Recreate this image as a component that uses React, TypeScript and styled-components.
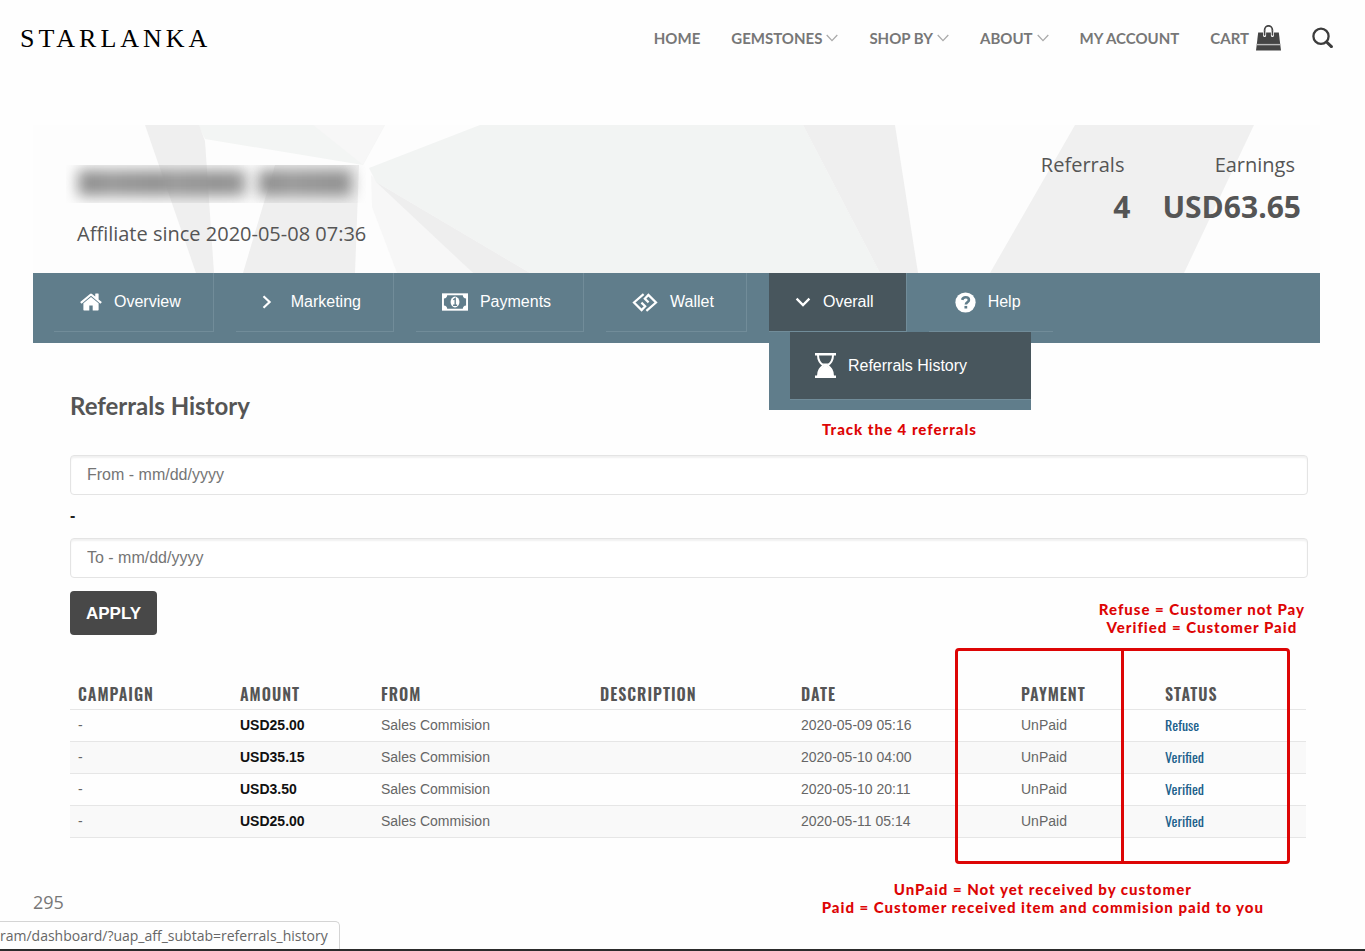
import React from "react";
import styled, { createGlobalStyle } from "styled-components";

const sans = `"Liberation Sans", Arial, sans-serif`;
const openSans = `"Open Sans", "Noto Sans", sans-serif`;
const lato = `Lato, "Open Sans", sans-serif`;
const narrow = `Oswald, "Liberation Sans Narrow", "Roboto Condensed", "Open Sans Condensed", "Liberation Sans", sans-serif`;

const teal = "#607d8b";
const slate = "#48565d";
const red = "#dd0505";

const GlobalStyle = createGlobalStyle`
  *, *::before, *::after { box-sizing: border-box; }
  body { margin: 0; background: #fefefe; color: #555; font-family: ${sans}; }
  a { color: inherit; text-decoration: none; }
  ul { list-style: none; margin: 0; padding: 0; }
  svg { display: block; flex: none; }
`;

const Page = styled.div`
  position: relative;
  min-height: 100vh;
  overflow-x: hidden;
  border-bottom: 2px solid #2b2b2b;
`;

const Header = styled.header`
  display: flex;
  align-items: center;
  justify-content: space-between;
  height: 76px;
  padding: 0 32px 0 20px;
`;

const Logo = styled.a`
  padding-top: 2px;
  color: #000;
  font: 26px/30px "Liberation Serif", "Times New Roman", serif;
  letter-spacing: 4px;
`;

const MainMenu = styled.ul`
  display: flex;
  align-items: center;
  gap: 31px;
`;

const MenuLink = styled.a<{ $wide?: boolean }>`
  display: flex;
  align-items: center;
  gap: ${(p) => (p.$wide ? 7 : 4)}px;
  color: #777;
  font: 700 15px/20px ${lato};
`;

const IconButton = styled.button`
  padding: 2px 0 0;
  border: 0;
  background: none;
  color: #444;
  cursor: pointer;
`;

const Main = styled.main`
  padding: 49px 45px 24px 33px;
`;

const Banner = styled.section`
  position: relative;
  display: flex;
  justify-content: space-between;
  height: 148px;
  background: #fdfdfd;
`;

const BannerArt = styled.svg`
  position: absolute;
  inset: 0;
  width: 100%;
  height: 100%;
`;

const Profile = styled.div`
  position: relative;
  padding: 40px 0 0 33px;
`;

const HiddenName = styled.div`
  display: flex;
  gap: 12px;
  height: 38px;
  padding: 5px 12px;
  overflow: hidden;
`;

const HiddenWord = styled.span<{ $w: number }>`
  width: ${(p) => p.$w}px;
  height: 26px;
  background: repeating-linear-gradient(90deg, #929292 0 26px, #999 26px 42px, #959595 42px 64px);
  filter: blur(7px);
`;

const Since = styled.p`
  margin: 17px 0 0 11px;
  font: 20px/28px ${openSans};
`;

const Stats = styled.dl`
  position: relative;
  display: flex;
  gap: 32px;
  margin: 0;
  padding: 26px 19px 0 0;
  text-align: right;
`;

const StatLabel = styled.dt`
  padding-right: 6px;
  font: 20px/28px ${openSans};
`;

const StatValue = styled.dd`
  margin: 8px 0 0;
  font: 700 30px/40px ${openSans};
`;

const Tabs = styled.ul`
  display: flex;
  gap: 22px;
  height: 70px;
  padding-left: 21px;
  background: ${teal};
`;

const Tab = styled.li<{ $active?: boolean; $last?: boolean }>`
  position: relative;
  height: 59px;
  border: solid #718c99;
  border-width: 0 ${(p) => (p.$last ? 0 : 1)}px 1px 0;
  background: ${(p) => (p.$active ? slate : "transparent")};
`;

const TabLink = styled.a`
  display: flex;
  align-items: center;
  gap: 12px;
  height: 58px;
  padding: 0 32px 0 26px;
  color: #fff;
  font: 16px/20px ${sans};
`;

const IconSlot = styled.span<{ $w: number }>`
  display: flex;
  width: ${(p) => p.$w}px;
`;

const SubMenu = styled.ul`
  position: absolute;
  z-index: 2;
  top: 59px;
  left: 0;
  width: 262px;
  padding: 0 0 10px 21px;
  background: ${teal};
`;

const SubLink = styled.a`
  display: flex;
  align-items: center;
  gap: 12px;
  height: 68px;
  padding-left: 25px;
  border-bottom: 1px solid #718c99;
  background: ${slate};
  color: #fff;
  font: 16px/20px ${sans};
`;

const Content = styled.section`
  position: relative;
  padding: 48px 12px 0 37px;
`;

const Title = styled.h3`
  margin: 0 0 34px;
  font: 700 24px/30px ${lato};
`;

const DateInput = styled.input`
  display: block;
  width: 100%;
  height: 40px;
  padding: 0 16px;
  border: 1px solid #e4e4e4;
  border-radius: 4px;
  background: #fff;
  box-shadow: inset 0 2px 2px rgba(0, 0, 0, 0.06);
  color: #555;
  font: 16px/20px ${sans};
  &::placeholder { color: #757575; opacity: 1; }
`;

const Dash = styled.div`
  height: 43px;
  color: #222;
  font: 700 16px/42px ${sans};
`;

const Apply = styled.button`
  display: block;
  height: 44px;
  margin-top: 13px;
  padding: 2px 16px 0;
  border: 0;
  border-radius: 4px;
  background: #484848;
  color: #fff;
  font: 700 17px/20px ${sans};
  cursor: pointer;
`;

const TableArea = styled.div`
  position: relative;
  margin: 43px 2px 0 0;
`;

const Table = styled.table`
  width: 100%;
  table-layout: fixed;
  border-collapse: collapse;
  text-align: left;
`;

const Col = styled.col<{ $w: number }>`
  width: ${(p) => p.$w}px;
`;

const Row = styled.tr<{ $striped?: boolean }>`
  height: 32px;
  border-bottom: 1px solid #e6e6e6;
  background: ${(p) => (p.$striped ? "#f9f9f9" : "transparent")};
`;

const HeadRow = styled(Row)`
  height: 31px;
`;

const HeadCell = styled.th`
  padding: 2px 8px 0;
  color: #555;
  font: 600 16px/20px ${narrow};
  letter-spacing: 1px;
`;

const Cell = styled.td`
  padding: 0 8px;
  color: #666;
  font: 14px/20px ${sans};
`;

const Amount = styled.strong`
  color: #111;
`;

const Status = styled.span`
  color: #21618c;
  font: 400 14px/20px ${narrow};
`;

const Highlights = styled.div`
  position: absolute;
  top: -30px;
  right: 16px;
  bottom: -26px;
  display: flex;
  width: 335px;
  border: 3px solid ${red};
  border-radius: 4px;
  pointer-events: none;
`;

const HighlightHalf = styled.div`
  flex: 1;
  & + & { border-left: 3px solid ${red}; }
`;

const Note = styled.p`
  position: absolute;
  margin: 0;
  color: ${red};
  font: 900 15px/18px ${lato};
  letter-spacing: 1px;
  text-align: center;
  white-space: nowrap;
`;

const MenuNote = styled(Note)`
  top: 77px;
  left: 789px;
`;

const StatusNote = styled(Note)`
  right: 1px;
  bottom: calc(100% + 42px);
`;

const PaymentNote = styled(Note)`
  right: 42px;
  top: calc(100% + 42px);
`;

const Views = styled.p`
  margin: 52px 0 0;
  color: #777;
  font: 18px/24px ${openSans};
`;

const StatusBar = styled.div`
  position: absolute;
  bottom: 0;
  left: 0;
  height: 28px;
  padding-right: 11px;
  border: solid #d4d4d4;
  border-width: 1px 1px 0 0;
  border-radius: 0 5px 0 0;
  background: #fefefe;
  color: #666;
  font: 14px/27px ${openSans};
`;

const Caret = () => (
  <svg width="12" height="8" viewBox="0 0 12 8" fill="none" stroke="#aaa" strokeWidth="1.3">
    <path d="M.7 1l5.3 5.6L11.3 1" />
  </svg>
);

const BagIcon = () => (
  <svg width="25" height="26" viewBox="0 0 25 26">
    <path d="M8.6 12V5a3.9 4.2 0 0 1 7.8 0v7" fill="none" stroke="#444" strokeWidth="1.7" />
    <path d="M2.2 7.5h20.6L25 25.5H0z" fill="#444" />
    <path d="M8.6 7v3.6M16.4 7v3.6" stroke="#fff" strokeWidth="3" strokeLinecap="round" />
    <path d="M8.6 6v4M16.4 6v4" stroke="#444" strokeWidth="1.5" strokeLinecap="round" />
    <path d="M.5 19.6h24" stroke="#bbb" strokeWidth="1.4" />
  </svg>
);

const SearchIcon = () => (
  <svg width="21" height="21" viewBox="0 0 21 21" fill="none" stroke="#3c3c3c">
    <circle cx="9" cy="9.3" r="7.6" strokeWidth="2.3" />
    <path d="M14.6 15l4.8 4.6" strokeWidth="3" strokeLinecap="round" />
  </svg>
);

const HomeIcon = () => (
  <svg width="22" height="18" viewBox="0 240 1664 1300" fill="#fff">
    <path d="M1408 992v480q0 26-19 45t-45 19h-384v-384h-256v384h-384q-26 0-45-19t-19-45v-480q0-1 .5-3t.5-3l575-474 575 474q1 2 1 6zm223-69l-62 74q-8 9-21 11h-3q-13 0-21-7l-692-577-692 577q-12 8-24 7-13-2-21-11l-62-74q-8-10-7-23.5t11-21.5l719-599q32-26 76-26t76 26l244 204v-195q0-14 9-23t23-9h192q14 0 23 9t9 23v408l219 182q10 8 11 21.5t-7 23.5z" />
  </svg>
);

const AngleRight = () => (
  <svg width="10" height="14" viewBox="0 0 10 14" fill="none" stroke="#fff" strokeWidth="2.2">
    <path d="M1.5 1.2L7.6 7l-6.1 5.8" />
  </svg>
);

const AngleDown = () => (
  <svg width="16" height="10" viewBox="0 0 16 10" fill="none" stroke="#fff" strokeWidth="2.3">
    <path d="M1.6 1.6L8 8l6.4-6.4" />
  </svg>
);

const MoneyIcon = () => (
  <svg width="26" height="18" viewBox="0 0 27 18">
    <path fill="#fff" d="M0 0h27v18H0z" />
    <path fill={teal} d="M5.4 2h16.2A3.6 3.6 0 0 0 25 5.4v7.2A3.6 3.6 0 0 0 21.6 16H5.4A3.6 3.6 0 0 0 2 12.6V5.4A3.6 3.6 0 0 0 5.4 2z" />
    <ellipse cx="13.5" cy="9" rx="4.6" ry="5.6" fill="#fff" />
    <path d="M11.7 6.7L13.7 5.3v7M11.5 12.4h4.2" fill="none" stroke={teal} strokeWidth="1.4" />
  </svg>
);

const WalletIcon = () => (
  <svg width="26" height="19" viewBox="0 0 26 19" fill="none" stroke="#fff" strokeWidth="2.2">
    <path d="M11.6 1.2L2 9.5l7.6 7.6 3.6-3.8-3.8-3.7" />
    <path d="M14.4 17.8L24 9.5l-7.600-7.600-3.600 3.800 3.800 3.700" />
  </svg>
);

const HelpIcon = () => (
  <svg width="21" height="21" viewBox="0 0 22 22">
    <circle cx="11" cy="11" r="10.6" fill="#fff" />
    <path d="M7.5 8.3C8 6.2 9.4 5.5 11.1 5.5c2 0 3.5 1.1 3.5 2.9 0 2.3-3.2 2.5-3.2 4.7" fill="none" stroke={teal} strokeWidth="2.7" />
    <path fill={teal} d="M9.9 14.6h2.9v2.7H9.9z" />
  </svg>
);

const HourglassIcon = () => (
  <svg width="21" height="25" viewBox="0 0 21 25">
    <path d="M0 1.2h21M0 23.8h21" stroke="#fff" strokeWidth="2.4" />
    <path d="M3 2c0 6 2.3 8 5.4 10.5C5.3 15 3 17 3 23M18 2c0 6-2.3 8-5.4 10.5C15.7 15 18 17 18 23" fill="none" stroke="#fff" strokeWidth="2" />
    <path d="M7 10.500h7l-2.300 2L14 14.500c2 1.500 4 4 4 8.500H3c0-4.500 2-7 4-8.500l2.300-2z" fill="#fff" />
  </svg>
);

const menu = [
  { label: "HOME" },
  { label: "GEMSTONES", caret: true },
  { label: "SHOP BY", caret: true },
  { label: "ABOUT", caret: true },
  { label: "MY ACCOUNT" },
  { label: "CART", bag: true },
];

const tabs = [
  { label: "Overview", slot: 22, icon: <HomeIcon /> },
  { label: "Marketing", slot: 17, icon: <AngleRight /> },
  { label: "Payments", slot: 26, icon: <MoneyIcon /> },
  { label: "Wallet", slot: 26, icon: <WalletIcon /> },
  { label: "Overall", slot: 16, icon: <AngleDown />, active: true },
  { label: "Help", slot: 21, icon: <HelpIcon />, last: true },
];

const columns = [
  { label: "CAMPAIGN", width: 162 },
  { label: "AMOUNT", width: 141 },
  { label: "FROM", width: 219 },
  { label: "DESCRIPTION", width: 201 },
  { label: "DATE", width: 220 },
  { label: "PAYMENT", width: 144 },
  { label: "STATUS", width: 149 },
];

const referrals = [
  { amount: "USD25.00", date: "2020-05-09 05:16", status: "Refuse" },
  { amount: "USD35.15", date: "2020-05-10 04:00", status: "Verified" },
  { amount: "USD3.50", date: "2020-05-10 20:11", status: "Verified" },
  { amount: "USD25.00", date: "2020-05-11 05:14", status: "Verified" },
];

export default function App() {
  return (
    <Page>
      <GlobalStyle />
      <Header>
        <Logo href="#">STARLANKA</Logo>
        <nav>
          <MainMenu>
            {menu.map((m) => (
              <li key={m.label}>
                <MenuLink href="#" $wide={m.bag}>
                  {m.label}
                  {m.caret && <Caret />}
                  {m.bag && <BagIcon />}
                </MenuLink>
              </li>
            ))}
            <li>
              <IconButton type="button" aria-label="Search">
                <SearchIcon />
              </IconButton>
            </li>
          </MainMenu>
        </nav>
      </Header>

      <Main>
        <Banner>
          <BannerArt viewBox="0 0 1287 148" preserveAspectRatio="none" aria-hidden="true">
            <path fill="#f3f5f4" d="M165 0h187l-22 40L172 14z" />
            <path fill="#f7f7f7" d="M280 0h72l-22 40z" />
            <path fill="#efefef" d="M112 0h54l6 16 9 132h-18z" />
            <path fill="#efefef" d="M242 40h84l-4 108H210z" />
            <path fill="#f7f7f7" d="M338 50l102 98h-76l-25-66z" />
            <path fill="#f2f4f3" d="M447 0h323l77 148H497L343 57l-7-14z" />
            <path fill="#eee" d="M343 57l154 91h-57z" />
            <path fill="#efefef" d="M770 0h92l23 148h-38z" />
            <path fill="#f0f0f0" d="M1042 0h179l-70 148H957z" />
          </BannerArt>
          <Profile>
            <HiddenName aria-hidden="true">
              <HiddenWord $w={168} />
              <HiddenWord $w={94} />
            </HiddenName>
            <Since>Affiliate since 2020-05-08 07:36</Since>
          </Profile>
          <Stats>
            <div>
              <StatLabel>Referrals</StatLabel>
              <StatValue>4</StatValue>
            </div>
            <div>
              <StatLabel>Earnings</StatLabel>
              <StatValue>USD63.65</StatValue>
            </div>
          </Stats>
        </Banner>

        <nav>
          <Tabs>
            {tabs.map((t) => (
              <Tab key={t.label} $active={t.active} $last={t.last}>
                <TabLink href="#">
                  <IconSlot $w={t.slot}>{t.icon}</IconSlot>
                  {t.label}
                </TabLink>
                {t.active && (
                  <SubMenu>
                    <li>
                      <SubLink href="#">
                        <HourglassIcon />
                        Referrals History
                      </SubLink>
                    </li>
                  </SubMenu>
                )}
              </Tab>
            ))}
          </Tabs>
        </nav>

        <Content>
          <MenuNote>Track the 4 referrals</MenuNote>
          <Title>Referrals History</Title>
          <form onSubmit={(e) => e.preventDefault()}>
            <DateInput type="text" aria-label="From date" placeholder="From - mm/dd/yyyy" />
            <Dash>-</Dash>
            <DateInput type="text" aria-label="To date" placeholder="To - mm/dd/yyyy" />
            <Apply type="submit">APPLY</Apply>
          </form>

          <TableArea>
            <Table>
              <colgroup>
                {columns.map((c) => (
                  <Col key={c.label} $w={c.width} />
                ))}
              </colgroup>
              <thead>
                <HeadRow>
                  {columns.map((c) => (
                    <HeadCell key={c.label} scope="col">{c.label}</HeadCell>
                  ))}
                </HeadRow>
              </thead>
              <tbody>
                {referrals.map((r, i) => (
                  <Row key={r.date} $striped={i % 2 === 1}>
                    <Cell>-</Cell>
                    <Cell><Amount>{r.amount}</Amount></Cell>
                    <Cell>Sales Commision</Cell>
                    <Cell />
                    <Cell>{r.date}</Cell>
                    <Cell>UnPaid</Cell>
                    <Cell><Status>{r.status}</Status></Cell>
                  </Row>
                ))}
              </tbody>
            </Table>
            <Highlights>
              <HighlightHalf />
              <HighlightHalf />
            </Highlights>
            <StatusNote>
              Refuse = Customer not Pay
              <br />
              Verified = Customer Paid
            </StatusNote>
            <PaymentNote>
              UnPaid = Not yet received by customer
              <br />
              Paid = Customer received item and commision paid to you
            </PaymentNote>
          </TableArea>
        </Content>
        <Views>295</Views>
      </Main>
      <StatusBar>ram/dashboard/?uap_aff_subtab=referrals_history</StatusBar>
    </Page>
  );
}
